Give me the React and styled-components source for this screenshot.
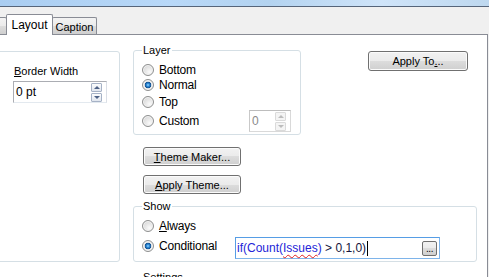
import React from 'react';
import styled, { createGlobalStyle } from 'styled-components';

const GlobalStyle = createGlobalStyle`
  html, body {
    margin: 0;
    padding: 0;
    overflow: hidden;
    background: #f0f0f0;
  }
`;

const Page = styled.div`
  width: 489px;
  height: 277px;
  overflow: hidden;
  display: flex;
  flex-direction: column;
  background: #f0f0f0;
  font-family: 'Liberation Sans', Arial, sans-serif;
  font-size: 11px;
  color: #000;
`;

const TitleBar = styled.div`
  height: 6px;
  flex: none;
  background: linear-gradient(90deg, #a9cdf1 0%, #b8d8f8 35%, #b3d3f0 55%, #cfe4f9 78%, #bed8ef 100%);
  border-bottom: 1px solid #56657a;
`;

const TabStrip = styled.div`
  height: 27px;
  flex: none;
  display: flex;
  align-items: flex-end;
`;

const Tab = styled.div`
  box-sizing: border-box;
  width: ${({ $w }) => $w}px;
  margin-left: ${({ $ml }) => $ml ?? -1}px;
  height: ${({ $active }) => ($active ? 21 : 17)}px;
  margin-bottom: ${({ $active }) => ($active ? -1 : 0)}px;
  padding-top: ${({ $active }) => ($active ? 3 : 2)}px;
  border: 1px solid #898c95;
  border-bottom: none;
  border-radius: 2px 2px 0 0;
  background: ${({ $active }) =>
    $active ? '#fff' : 'linear-gradient(#f3f3f3 0%, #ebebeb 50%, #dddddd 50%, #cfcfcf 100%)'};
  position: relative;
  z-index: ${({ $active }) => ($active ? 2 : 1)};
  line-height: 14px;
  text-align: center;
  font-size: ${({ $active }) => ($active ? 12 : 11)}px;
`;

const Panel = styled.div`
  flex: 1;
  width: 488px;
  box-sizing: border-box;
  display: flex;
  align-items: flex-start;
  background: #fff;
  border-top: 1px solid #898c95;
  border-right: 1px solid #898c95;
`;

const GroupBox = styled.div`
  position: relative;
  box-sizing: border-box;
  border: 1px solid #d5dfe5;
  border-radius: 3px;
  flex: none;
`;

const Legend = styled.span`
  position: absolute;
  top: -7px;
  left: 8px;
  padding: 0 1px;
  background: #fff;
  line-height: 13px;
`;

const LeftBox = styled(GroupBox)`
  margin-left: -10px;
  margin-top: 16px;
  width: 130px;
  height: 211px;
  padding: 13px 0 0 22px;
`;

const FieldLabel = styled.div`
  line-height: 13px;
  margin: 0 0 3px 1px;
`;

const SpinBox = styled.div`
  box-sizing: border-box;
  width: ${({ $w }) => $w}px;
  height: 22px;
  display: flex;
  align-items: center;
  padding-left: 2px;
  border: 1px solid ${({ $disabled }) => ($disabled ? '#c9c9c9' : '#abadb3')};
  border-top-color: ${({ $disabled }) => ($disabled ? '#bdbdbd' : '#abadb3')};
  border-right-color: ${({ $disabled }) => ($disabled ? '#d9d9d9' : '#dbdfe6')};
  border-bottom-color: ${({ $disabled }) => ($disabled ? '#d9d9d9' : '#e3e9ef')};
  color: ${({ $disabled }) => ($disabled ? '#8a8a8a' : '#000')};
  font-size: 12px;
`;

const SpinValue = styled.span`
  flex: 1;
`;

const SpinColumn = styled.div`
  display: flex;
  flex-direction: column;
  gap: 1px;
  margin-right: 4px;
`;

const SpinButton = styled.span`
  box-sizing: border-box;
  width: 11px;
  height: 9px;
  display: flex;
  align-items: center;
  justify-content: center;
  border: 1px solid ${({ $disabled }) => ($disabled ? '#dadada' : '#a6b2c6')};
  border-radius: 1px;
  background: ${({ $disabled }) =>
    $disabled ? '#f4f4f4' : 'linear-gradient(#fbfcfd, #e1e6ee)'};

  &::after {
    content: '';
    width: 0;
    height: 0;
    border-left: 3px solid transparent;
    border-right: 3px solid transparent;
    ${({ $dir, $disabled }) =>
      $dir === 'up'
        ? `border-bottom: 3px solid ${$disabled ? '#bcbcbc' : '#4d6185'};`
        : `border-top: 3px solid ${$disabled ? '#bcbcbc' : '#4d6185'};`}
  }
`;

const RightColumn = styled.div`
  width: 344px;
  margin-left: 13px;
  display: flex;
  flex-direction: column;
  align-items: flex-start;
`;

const TopRow = styled.div`
  display: flex;
  align-items: flex-start;
  margin-top: 15px;
`;

const LayerBox = styled(GroupBox)`
  width: 168px;
  height: 85px;
  padding: 11px 0 0 8px;
`;

const RadioRow = styled.div`
  height: ${({ $h }) => $h ?? 16}px;
  display: flex;
  align-items: center;
`;

const Radio = styled.span`
  box-sizing: border-box;
  width: 12px;
  height: 12px;
  flex: none;
  border-radius: 50%;
  border: 1px solid #8e8f8f;
  background: ${({ $checked }) =>
    $checked
      ? 'radial-gradient(circle at 50% 50%, #9fdcff 0, #2d8ad8 1.5px, #14508e 3px, #e8e8e8 3.6px, #f6f6f6 100%)'
      : 'radial-gradient(circle at 65% 70%, #fbfbfb 0, #e6e6e6 45%, #cfcfcf 100%)'};
  box-shadow: inset 0 0 0 1px #f4f4f4;
  margin-right: 5px;
`;

const RadioText = styled.span`
  width: ${({ $w }) => ($w ? `${$w}px` : 'auto')};
  flex: none;
  line-height: 16px;
  font-size: 12px;
  letter-spacing: -0.2px;
`;

const Button = styled.button`
  box-sizing: border-box;
  width: ${({ $w }) => $w}px;
  height: ${({ $h }) => $h ?? 20}px;
  margin: ${({ $m }) => $m ?? 0};
  padding: 0;
  border: 1px solid #707070;
  border-radius: 3px;
  background: linear-gradient(#f2f2f2 0%, #ebebeb 50%, #dddddd 50%, #cfcfcf 100%);
  box-shadow: inset 0 0 0 1px #fbfbfb;
  font-family: inherit;
  font-size: 11px;
  color: #000;
  line-height: 16px;
  flex: none;
`;

const ShowBox = styled(GroupBox)`
  width: 344px;
  height: 56px;
  margin-top: 12px;
  padding: 11px 0 0 8px;
`;

const ConditionRow = styled.div`
  display: flex;
  align-items: flex-start;
  margin-top: 3px;
`;

const ConditionOption = styled.div`
  display: flex;
  align-items: center;
  margin-top: 1px;
`;

const ExpressionBox = styled.div`
  box-sizing: border-box;
  width: 205px;
  height: 22px;
  display: flex;
  align-items: center;
  padding-left: 1px;
  border: 1px solid #7eb4ea;
  border-top-color: #569de5;
  border-left-color: #569de5;
  font-size: 12px;
  white-space: pre;
`;

const FnText = styled.span`
  color: #2424d8;
`;

const FieldText = styled.span`
  color: #2424d8;
  text-decoration: underline wavy #e02020;
  text-decoration-thickness: 1px;
  text-underline-offset: 2px;
`;

const PlainText = styled.span`
  color: #14143c;
`;

const Caret = styled.span`
  width: 1px;
  height: 15px;
  background: #000;
  margin-left: 1px;
`;

const DotsButton = styled.span`
  box-sizing: border-box;
  width: 15px;
  height: 15px;
  margin: 0 2px 0 auto;
  border: 1px solid #707070;
  border-radius: 2px;
  background: linear-gradient(#f2f2f2 0%, #ebebeb 50%, #dddddd 50%, #cfcfcf 100%);
  font-size: 10px;
  line-height: 13px;
  text-align: center;
  letter-spacing: -0.5px;
  color: #000;
`;

const SettingsBox = styled(GroupBox)`
  width: 344px;
  height: 40px;
  margin-top: 15px;
`;

const App = () => (
  <Page>
    <GlobalStyle />
    <TitleBar />
    <TabStrip>
      <Tab $w={20} $ml={-13} />
      <Tab $active $w={47}>Layout</Tab>
      <Tab $w={45}>Caption</Tab>
    </TabStrip>

    <Panel>
      <LeftBox>
        <FieldLabel>
          <u>B</u>order Width
        </FieldLabel>
        <SpinBox $w={94}>
          <SpinValue>0 pt</SpinValue>
          <SpinColumn>
            <SpinButton $dir="up" />
            <SpinButton $dir="down" />
          </SpinColumn>
        </SpinBox>
      </LeftBox>

      <RightColumn>
        <TopRow>
          <LayerBox>
            <Legend>Layer</Legend>
            <RadioRow $h={15}>
              <Radio />
              <RadioText>Bottom</RadioText>
            </RadioRow>
            <RadioRow $h={16}>
              <Radio $checked />
              <RadioText>Normal</RadioText>
            </RadioRow>
            <RadioRow $h={17}>
              <Radio />
              <RadioText>Top</RadioText>
            </RadioRow>
            <RadioRow $h={22}>
              <Radio />
              <RadioText $w={90}>Custom</RadioText>
              <SpinBox $w={42} $disabled>
                <SpinValue>0</SpinValue>
                <SpinColumn>
                  <SpinButton $dir="up" $disabled />
                  <SpinButton $dir="down" $disabled />
                </SpinColumn>
              </SpinBox>
            </RadioRow>
          </LayerBox>
          <Button $w={100} $m="1px 0 0 67px">
            Apply To<u>.</u>..
          </Button>
        </TopRow>

        <Button $w={98} $h={19} $m="12px 0 0 10px">
          <u>T</u>heme Maker...
        </Button>
        <Button $w={98} $h={19} $m="9px 0 0 10px">
          <u>A</u>pply Theme...
        </Button>

        <ShowBox>
          <Legend>Show</Legend>
          <RadioRow>
            <Radio />
            <RadioText>
              <u>A</u>lways
            </RadioText>
          </RadioRow>
          <ConditionRow>
            <ConditionOption>
              <Radio $checked />
              <RadioText $w={76}>Conditional</RadioText>
            </ConditionOption>
            <ExpressionBox>
              <FnText>if(Count(</FnText>
              <FieldText>Issues</FieldText>
              <FnText>)</FnText>
              <PlainText> &gt; 0,1,0)</PlainText>
              <Caret />
              <DotsButton>...</DotsButton>
            </ExpressionBox>
          </ConditionRow>
        </ShowBox>

        <SettingsBox>
          <Legend>Settings</Legend>
        </SettingsBox>
      </RightColumn>
    </Panel>
  </Page>
);

export default App;
